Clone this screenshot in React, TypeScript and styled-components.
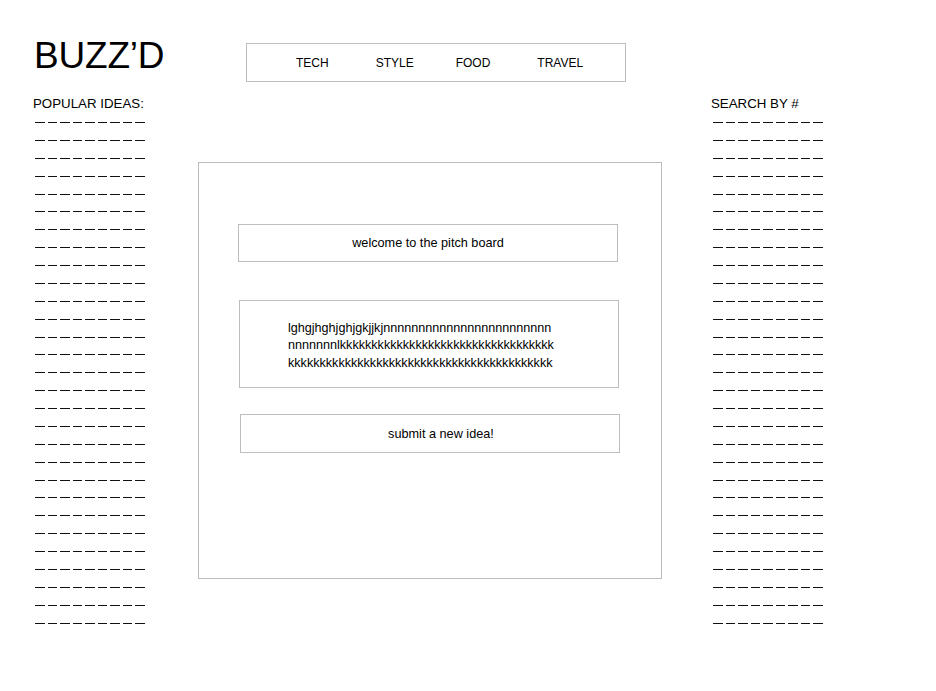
import React from "react";
import styled, { createGlobalStyle } from "styled-components";

const GlobalStyle = createGlobalStyle`
  html, body {
    margin: 0;
    padding: 0;
    background: #ffffff;
  }
  body {
    font-family: "Liberation Sans", Arial, Helvetica, sans-serif;
    color: #000000;
  }
  * { box-sizing: border-box; }
`;

const Page = styled.div`
  display: flex;
  align-items: flex-start;
  width: 936px;
  height: 691px;
  padding-left: 33px;
  overflow: hidden;
`;

const LeftColumn = styled.div`
  width: 165px;
  display: flex;
  flex-direction: column;
`;

const CenterColumn = styled.div`
  width: 464px;
  display: flex;
  flex-direction: column;
`;

const RightColumn = styled.div`
  margin-left: 49px;
  padding-top: 95px;
  display: flex;
  flex-direction: column;
`;

const Title = styled.h1`
  margin: 35px 0 0 1px;
  font-size: 37px;
  line-height: 42px;
  font-weight: 400;
  letter-spacing: -0.2px;
`;

const SideList = styled.div<{ $top: number }>`
  margin-top: ${(p) => p.$top}px;
  display: flex;
  flex-direction: column;
`;

const SideLabel = styled.div`
  font-size: 13.3px;
  line-height: 18px;
  height: 18px;
  white-space: nowrap;
`;

const DashRow = styled.div<{ $indent: number }>`
  display: flex;
  gap: 3px;
  height: 1px;
  margin-left: ${(p) => p.$indent}px;
  margin-bottom: 16.88px;
`;

const Dash = styled.span`
  width: 9.5px;
  height: 1px;
  background: #111;
`;

const DashGroup = styled.div`
  margin-top: 9px;
  display: flex;
  flex-direction: column;
`;

const Nav = styled.nav`
  margin: 43px 0 0 48px;
  width: 380px;
  height: 39px;
  border: 1px solid #bdbdbd;
  display: flex;
  align-items: center;
`;

const NavItem = styled.span<{ $lead: number; $drop?: number }>`
  margin-left: ${(p) => p.$lead}px;
  margin-top: ${(p) => (p.$drop ? p.$drop * 2 : 0)}px;
  font-size: 12px;
  line-height: 14px;
  white-space: nowrap;
`;

const Board = styled.section`
  margin-top: 80px;
  width: 464px;
  height: 417px;
  border: 1px solid #bdbdbd;
  padding-top: 61px;
  display: flex;
  flex-direction: column;
`;

const Panel = styled.div<{ $offset: number; $height: number; $gap: number }>`
  margin-left: ${(p) => p.$offset}px;
  margin-top: ${(p) => p.$gap}px;
  width: 380px;
  height: ${(p) => p.$height}px;
  border: 1px solid #bdbdbd;
  padding-top: 2px;
  display: flex;
  align-items: center;
  font-size: 12.7px;
  line-height: 17.5px;
`;

const CenteredText = styled.span<{ $shift: number }>`
  flex: 1;
  text-align: center;
  padding-left: ${(p) => p.$shift}px;
  white-space: nowrap;
`;

const Paragraph = styled.p`
  margin: 2px 0 0 48px;
  display: flex;
  flex-direction: column;
  font-size: 12.6px;
`;

const ParagraphLine = styled.span`
  white-space: nowrap;
`;

const DASH_ROWS = 29;
const DASHES_PER_ROW = 9;

const DashColumn: React.FC<{ indent: number }> = ({ indent }) => (
  <DashGroup>
    {Array.from({ length: DASH_ROWS }).map((_, i) => (
      <DashRow key={i} $indent={indent}>
        {Array.from({ length: DASHES_PER_ROW }).map((__, j) => (
          <Dash key={j} />
        ))}
      </DashRow>
    ))}
  </DashGroup>
);

const lines = [
  "lghgjhghjghjgkjjkj" + "n".repeat(24),
  "n".repeat(7) + "l" + "k".repeat(34),
  "k".repeat(42),
];

export default function App() {
  return (
    <>
      <GlobalStyle />
      <Page>
        <LeftColumn>
          <Title>BUZZ’D</Title>
          <SideList $top={18}>
            <SideLabel>POPULAR IDEAS:</SideLabel>
            <DashColumn indent={2} />
          </SideList>
        </LeftColumn>

        <CenterColumn>
          <Nav>
            <NavItem $lead={49}>TECH</NavItem>
            <NavItem $lead={47} $drop={0.5}>STYLE</NavItem>
            <NavItem $lead={42} $drop={0.5}>FOOD</NavItem>
            <NavItem $lead={47}>TRAVEL</NavItem>
          </Nav>

          <Board>
            <Panel $offset={39} $height={38} $gap={0}>
              <CenteredText $shift={0}>welcome to the pitch board</CenteredText>
            </Panel>
            <Panel $offset={40} $height={88} $gap={38}>
              <Paragraph>
                {lines.map((l, i) => (
                  <ParagraphLine key={i}>{l}</ParagraphLine>
                ))}
              </Paragraph>
            </Panel>
            <Panel $offset={41} $height={39} $gap={26}>
              <CenteredText $shift={22}>submit a new idea!</CenteredText>
            </Panel>
          </Board>
        </CenterColumn>

        <RightColumn>
          <SideLabel>SEARCH BY #</SideLabel>
          <DashColumn indent={2} />
        </RightColumn>
      </Page>
    </>
  );
}
